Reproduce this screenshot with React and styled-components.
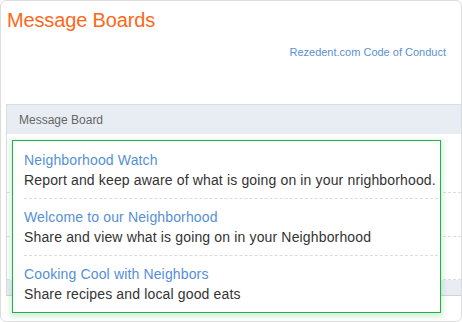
import React from 'react';
import styled, { createGlobalStyle } from 'styled-components';

const GlobalStyle = createGlobalStyle`
  html, body {
    margin: 0;
    padding: 0;
    background: #fff;
  }
  body {
    font-family: "Liberation Sans", Arial, sans-serif;
  }
`;

const Card = styled.div`
  position: relative;
  box-sizing: border-box;
  width: 462px;
  height: 322px;
  border: 1px solid #dcdcdc;
  border-radius: 6px;
  overflow: hidden;
  display: flex;
  flex-direction: column;
`;

const Title = styled.h1`
  margin: 8px 0 0 6px;
  font-size: 20px;
  line-height: 22px;
  font-weight: 400;
  letter-spacing: -0.15px;
  color: #fd6818;
`;

const LinkRow = styled.div`
  margin-top: 14px;
  padding-right: 15px;
  text-align: right;
  font-size: 11px;
  line-height: 15px;
`;

const ConductLink = styled.a`
  color: #5b8fd2;
  text-decoration: none;
`;

const Panel = styled.div`
  margin: 44px 0 0 5px;
  border-top: 1px solid #d7dde5;
  border-left: 1px solid #d7dde5;
  border-bottom: 1px solid #cfd3d8;
`;

const PanelHeader = styled.div`
  height: 29px;
  padding-left: 12px;
  display: flex;
  align-items: center;
  background: #e8edf4;
  color: #666;
  font-size: 12px;
`;

const PanelRow = styled.div`
  height: ${p => p.$h}px;
  border-bottom: 1px dashed #dedede;
`;

const PanelFooter = styled.div`
  height: 15px;
  background: #e8edf4;
`;

const Popover = styled.ul`
  position: absolute;
  left: 11px;
  top: 139px;
  box-sizing: border-box;
  width: 429px;
  margin: 0;
  padding: 1px 2px 0 11px;
  list-style: none;
  background: #fff;
  border: 1px solid #21b14b;
  box-shadow: 0 2px 5px 2px rgba(60, 190, 90, 0.22);
`;

const Item = styled.li`
  padding: 8px 0;
  border-bottom: 1px dashed #dcdcdc;
  font-size: 14px;
  line-height: 20px;
  letter-spacing: 0.15px;

  &:last-child {
    border-bottom: none;
  }
`;

const ItemTitle = styled.a`
  display: block;
  color: #5590d6;
  text-decoration: none;
`;

const ItemText = styled.div`
  color: #333;
`;

const boards = [
  {
    title: 'Neighborhood Watch',
    text: 'Report and keep aware of what is going on in your nrighborhood.',
  },
  {
    title: 'Welcome to our Neighborhood',
    text: 'Share and view what is going on in your Neighborhood',
  },
  {
    title: 'Cooking Cool with Neighbors',
    text: 'Share recipes and local good eats',
  },
];

export default function App() {
  return (
    <>
      <GlobalStyle />
      <Card>
        <Title>Message Boards</Title>
        <LinkRow>
          <ConductLink href="#">Rezedent.com Code of Conduct</ConductLink>
        </LinkRow>
        <Panel>
          <PanelHeader>Message Board</PanelHeader>
          <PanelRow $h={58} />
          <PanelRow $h={43} />
          <PanelRow $h={42} />
          <PanelFooter />
        </Panel>
        <Popover>
          {boards.map(b => (
            <Item key={b.title}>
              <ItemTitle href="#">{b.title}</ItemTitle>
              <ItemText>{b.text}</ItemText>
            </Item>
          ))}
        </Popover>
      </Card>
    </>
  );
}
